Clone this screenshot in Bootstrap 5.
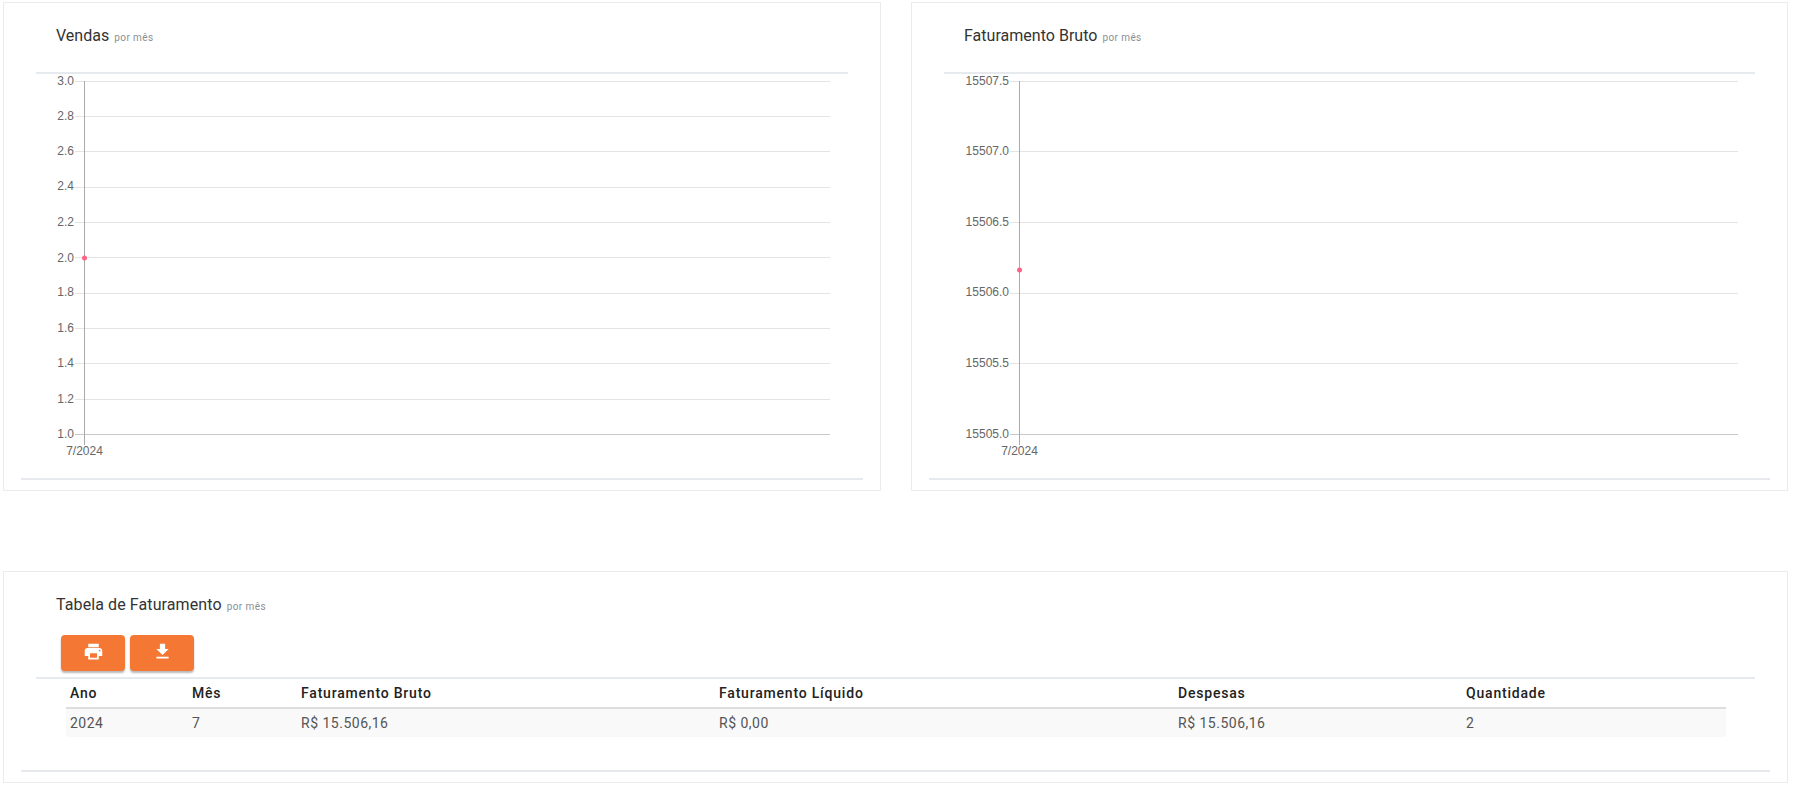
<!DOCTYPE html>
<html lang="pt-BR">
<head>
<meta charset="utf-8">
<title>Faturamento</title>
<link href="https://cdn.jsdelivr.net/npm/bootstrap@5.3.0/dist/css/bootstrap.min.css" rel="stylesheet">
<style>
html,body{height:786px;overflow:hidden;background:#fff}
body{font-family:Roboto,"Liberation Sans",sans-serif;color:#333;font-size:14px}
.pg{padding:2px 5px 0 3px}
.top-grid{display:grid;grid-template-columns:878px 877px;column-gap:30px}
.panel{border:1px solid #e9ecef;border-radius:0;background:#fff;height:489px;padding:0 17px;box-shadow:none}
.panel-wide{margin-top:80px;height:212px}
.ptitle{margin:0 0 0 35px;padding-top:23px;height:69px;font-size:16px;font-weight:400;line-height:19px;color:#333;letter-spacing:.02px}
.ptitle small{font-size:10px;color:#8a8f94;letter-spacing:.4px;margin-left:1px}
.card>hr.rule{height:2px;background:#e6e9ed;border:0;opacity:1;margin:0}
.card>hr.rule-head{margin:0 15px}
.chart-svg{display:block;width:100%;height:404px;margin-top:0}
.chart-svg text{font-family:"Liberation Sans",Arial,sans-serif;font-size:12px;fill:#666}
.panel-wide .ptitle{padding-top:23px;height:auto;line-height:19px;letter-spacing:.1px}
.btn-row{gap:5px;padding-left:40px;margin-top:19px;height:42px}
.btn-orange{width:64px;height:36px;padding:0 0 4px;background:#f47834;border:0;border-radius:4px;box-shadow:0 2px 2px rgba(0,0,0,.28);display:flex;align-items:center;justify-content:center}
.btn-orange:hover{background:#f47834}
.tbl-wrap{margin:0 45px}
.fat-table{margin:0;width:1660px;table-layout:fixed;font-size:14px;--bs-table-bg:transparent}
.fat-table th{font-weight:500;font-size:14px;letter-spacing:.8px;color:#222;padding:3px 4px 5px;height:29px;line-height:18px;border-bottom:2px solid #ddd}
.fat-table td{padding:4px;height:28px;line-height:20px;color:#555;letter-spacing:.5px;background:#f9f9f9;border:0;box-shadow:none}
.card.panel-wide>hr.rule-foot{margin-top:33px}
</style>
</head>
<body>
<main class="pg">
<div class="top-grid">
<section class="card panel">
<h5 class="ptitle">Vendas <small>por mês</small></h5>
<hr class="rule rule-head">
<svg class="chart-svg" viewBox="0 0 842 404" aria-label="Vendas por mês">
<path stroke="#e4e4e4" shape-rendering="crispEdges" d="M54 7.5H809M54 42.500H809M54 77.500H809M54 113.500H809M54 148.500H809M54 183.500H809M54 219.500H809M54 254.500H809M54 289.500H809M54 325.500H809"/>
<path d="M54 360.500H809" stroke="#c8c8c8" shape-rendering="crispEdges"/>
<path d="M63.500 7V371" stroke="#aaa" shape-rendering="crispEdges"/>
<g text-anchor="end">
<text x="53" y="11">3.0</text><text x="53" y="46">2.8</text><text x="53" y="81">2.6</text><text x="53" y="116">2.4</text><text x="53" y="152">2.2</text><text x="53" y="188">2.0</text><text x="53" y="222">1.8</text><text x="53" y="258">1.6</text><text x="53" y="293">1.4</text><text x="53" y="329">1.2</text><text x="53" y="364">1.0</text>
</g>
<text x="63.500" y="381" text-anchor="middle">7/2024</text>
<circle cx="63.500" cy="184" r="2.500" fill="#ff6384"/>
</svg>
<hr class="rule rule-foot">
</section>
<section class="card panel">
<h5 class="ptitle">Faturamento Bruto <small>por mês</small></h5>
<hr class="rule rule-head">
<svg class="chart-svg" viewBox="0 0 841 404" aria-label="Faturamento Bruto por mês">
<path stroke="#e4e4e4" shape-rendering="crispEdges" d="M81 7.500H809M81 77.500H809M81 148.500H809M81 219.500H809M81 289.500H809"/>
<path d="M81 360.500H809" stroke="#c8c8c8" shape-rendering="crispEdges"/>
<path d="M90.500 7V371" stroke="#aaa" shape-rendering="crispEdges"/>
<g text-anchor="end">
<text x="80" y="11">15507.5</text><text x="80" y="81">15507.0</text><text x="80" y="152">15506.5</text><text x="80" y="222">15506.0</text><text x="80" y="293">15505.5</text><text x="80" y="364">15505.0</text>
</g>
<text x="90.500" y="381" text-anchor="middle">7/2024</text>
<circle cx="90.500" cy="196" r="2.500" fill="#ff6384"/>
</svg>
<hr class="rule rule-foot">
</section>
</div>
<section class="card panel panel-wide">
<h5 class="ptitle">Tabela de Faturamento <small>por mês</small></h5>
<div class="d-flex btn-row">
<button type="button" class="btn btn-orange" aria-label="Imprimir"><svg width="21" height="21" viewBox="0 0 24 24"><path fill="#fff" d="M19 8H5c-1.660 0-3 1.340-3 3v6h4v4h12v-4h4v-6c0-1.660-1.340-3-3-3zm-3 11H8v-5h8v5zm3-7c-.550 0-1-.450-1-1s.450-1 1-1 1 .450 1 1-.450 1-1 1zm-1-9H6v4h12V3z"/></svg></button>
<button type="button" class="btn btn-orange" aria-label="Baixar"><svg width="21" height="21" viewBox="0 0 24 24"><path fill="#fff" d="M19 9h-4V3H9v6H5l7 7 7-7zM5 18v2h14v-2H5z"/></svg></button>
</div>
<hr class="rule rule-head">
<div class="tbl-wrap">
<table class="table fat-table">
<colgroup><col style="width:122px"><col style="width:109px"><col style="width:418px"><col style="width:459px"><col style="width:288px"><col style="width:264px"></colgroup>
<thead><tr><th>Ano</th><th>Mês</th><th>Faturamento Bruto</th><th>Faturamento Líquido</th><th>Despesas</th><th>Quantidade</th></tr></thead>
<tbody><tr><td>2024</td><td>7</td><td>R$ 15.506,16</td><td>R$ 0,00</td><td>R$ 15.506,16</td><td>2</td></tr></tbody>
</table>
</div>
<hr class="rule rule-foot">
</section>
</main>
<script src="https://cdn.jsdelivr.net/npm/bootstrap@5.3.0/dist/js/bootstrap.bundle.min.js"></script>
</body>
</html>
